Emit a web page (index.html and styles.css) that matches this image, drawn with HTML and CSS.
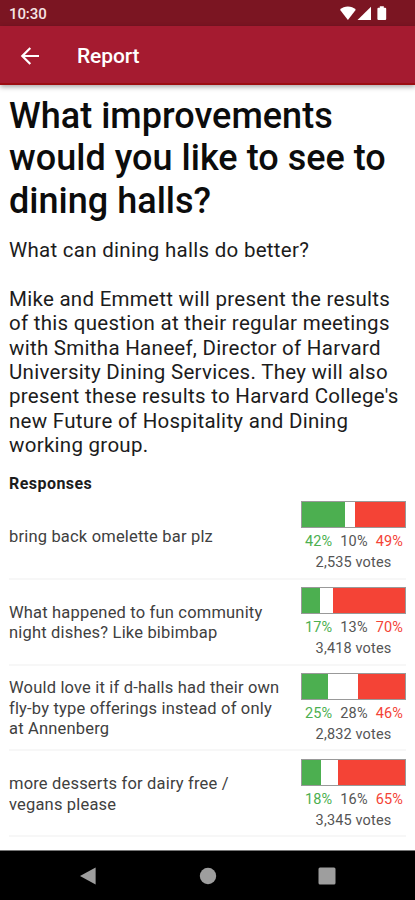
FILE: index.html
```html
<!DOCTYPE html>
<html lang="en">
  <head>
    <meta charset="utf-8">
    <title>Report</title>
    <link rel="stylesheet" href="styles.css">
  </head>
  <body>
    <div class="status-bar">
      <span class="clock">10:30</span>
      <svg class="status-icons" width="48" height="16" viewBox="0 0 48 16">
        <path d="M0 3.8C4.2 -0.5 11.6 -0.5 15.8 3.8L7.9 14Z" />
        <path d="M31 0.8V14H17.5Z" />
        <path d="M39.8 0.3h4v1.4h1.4q1 0 1 1v10.4q0 1-1 1h-6.8q-1 0-1-1V2.7q0-1 1-1h1.4z" />
      </svg>
    </div>
    <header class="app-bar">
      <svg class="back" width="20" height="20" viewBox="0 0 20 20">
        <path d="M19 10H2.5M10.3 2L2.3 10L10.3 18" />
      </svg>
      <span class="app-title">Report</span>
    </header>
    <main class="report">
      <h1 class="question">What improvements<br>would you like to see to<br>dining halls?</h1>
      <p class="description">What can dining halls do better?</p>
      <p class="description">Mike and Emmett will present the results<br>of this question at their regular meetings<br>with Smitha Haneef, Director of Harvard<br>University Dining Services. They will also<br>present these results to Harvard College's<br>new Future of Hospitality and Dining<br>working group.</p>
      <h2 class="subheading">Responses</h2>
      <div class="responses">
        <div class="response">
          <div class="answer">bring back omelette bar plz</div>
          <div class="result">
            <div class="bar">
              <div class="yes" style="width: 42%"></div>
              <div class="no" style="width: 49%"></div>
            </div>
            <div class="percents">
              <span class="green">42%</span><span>10%</span><span class="red">49%</span>
            </div>
            <div class="votes">2,535 votes</div>
          </div>
        </div>
        <div class="response">
          <div class="answer">What happened to fun community<br>night dishes? Like bibimbap</div>
          <div class="result">
            <div class="bar">
              <div class="yes" style="width: 17%"></div>
              <div class="no" style="width: 70%"></div>
            </div>
            <div class="percents">
              <span class="green">17%</span><span>13%</span><span class="red">70%</span>
            </div>
            <div class="votes">3,418 votes</div>
          </div>
        </div>
        <div class="response">
          <div class="answer">Would love it if d-halls had their own<br>fly-by type offerings instead of only<br>at Annenberg</div>
          <div class="result">
            <div class="bar">
              <div class="yes" style="width: 25%"></div>
              <div class="no" style="width: 46%"></div>
            </div>
            <div class="percents">
              <span class="green">25%</span><span>28%</span><span class="red">46%</span>
            </div>
            <div class="votes">2,832 votes</div>
          </div>
        </div>
        <div class="response">
          <div class="answer">more desserts for dairy free /<br>vegans please</div>
          <div class="result">
            <div class="bar">
              <div class="yes" style="width: 18%"></div>
              <div class="no" style="width: 65%"></div>
            </div>
            <div class="percents">
              <span class="green">18%</span><span>16%</span><span class="red">65%</span>
            </div>
            <div class="votes">3,345 votes</div>
          </div>
        </div>
      </div>
    </main>
    <nav class="nav-bar">
      <svg width="18" height="18" viewBox="0 0 18 18"><path d="M16.6 0.6V17.4L1 9Z" /></svg>
      <svg width="18" height="18" viewBox="0 0 18 18"><circle cx="9" cy="9" r="8.2" /></svg>
      <svg width="18" height="18" viewBox="0 0 18 18"><rect x="0.5" y="0.6" width="17" height="17" rx="1.5" /></svg>
    </nav>
  </body>
</html>
```
FILE: styles.css
```css
* {
  box-sizing: border-box;
}

body {
  margin: 0;
  height: 900px;
  display: flex;
  flex-direction: column;
  overflow: hidden;
  font-family: Roboto, sans-serif;
  background-color: #fff;
  color: #1c1c1c;
  white-space: nowrap;
}

.status-bar {
  display: flex;
  align-items: center;
  justify-content: space-between;
  height: 26px;
  padding: 1px 27px 0 9px;
  background-color: #7b1522;
  color: #f6e4e4;
}

.clock {
  font-size: 15px;
  font-weight: 500;
  letter-spacing: -0.1px;
}

.status-icons {
  fill: #fff;
}

.app-bar {
  display: flex;
  align-items: center;
  height: 59px;
  padding: 2px 20px 0;
  gap: 37px;
  background-color: #a51b30;
  border-bottom: 2px solid #9c0d12;
  box-shadow: 0 2px 5px rgba(0, 0, 0, 0.35);
  color: #fff;
}

.back {
  fill: none;
  stroke: #fff;
  stroke-width: 2.2;
}

.app-title {
  padding-top: 1px;
  font-size: 21px;
  font-weight: 500;
  letter-spacing: -0.1px;
}

.report {
  flex: 1;
  padding: 10px 9px 0;
}

.question {
  margin: 0 0 16px;
  font-size: 36px;
  font-weight: 500;
  line-height: 42.3px;
  letter-spacing: 0.02px;
  color: #0c0c0c;
}

.description {
  margin: 0 0 24.4px;
  font-size: 20.5px;
  line-height: 24.4px;
  letter-spacing: 0.28px;
}

.subheading {
  margin: -8px 0 0;
  font-size: 16px;
  font-weight: 700;
  line-height: 20px;
  letter-spacing: 0.45px;
}

.response {
  display: flex;
  align-items: center;
  justify-content: space-between;
  height: 85.8px;
  padding-top: 3px;
  border-bottom: 2px solid #f7f7f7;
}

.answer {
  font-size: 16.5px;
  line-height: 20.6px;
  letter-spacing: 0.18px;
  color: #404040;
}

.result {
  width: 105px;
  text-align: center;
  font-size: 14.5px;
  line-height: 21px;
  letter-spacing: 0.15px;
  color: #555;
}

.bar {
  display: flex;
  justify-content: space-between;
  height: 27px;
  margin-bottom: 3px;
  border: 1px solid #999;
}

.yes {
  background-color: #4caf50;
}

.no {
  background-color: #f44336;
}

.percents {
  display: flex;
  justify-content: space-between;
  padding: 0 3px 0 4px;
}

.green {
  color: #4caf50;
}

.red {
  color: #f44336;
}

.nav-bar {
  display: flex;
  align-items: center;
  justify-content: space-between;
  height: 50px;
  padding: 0 79px;
  background-color: #000;
  border-top: 1px solid #777;
  fill: #9e9e9e;
}
```
